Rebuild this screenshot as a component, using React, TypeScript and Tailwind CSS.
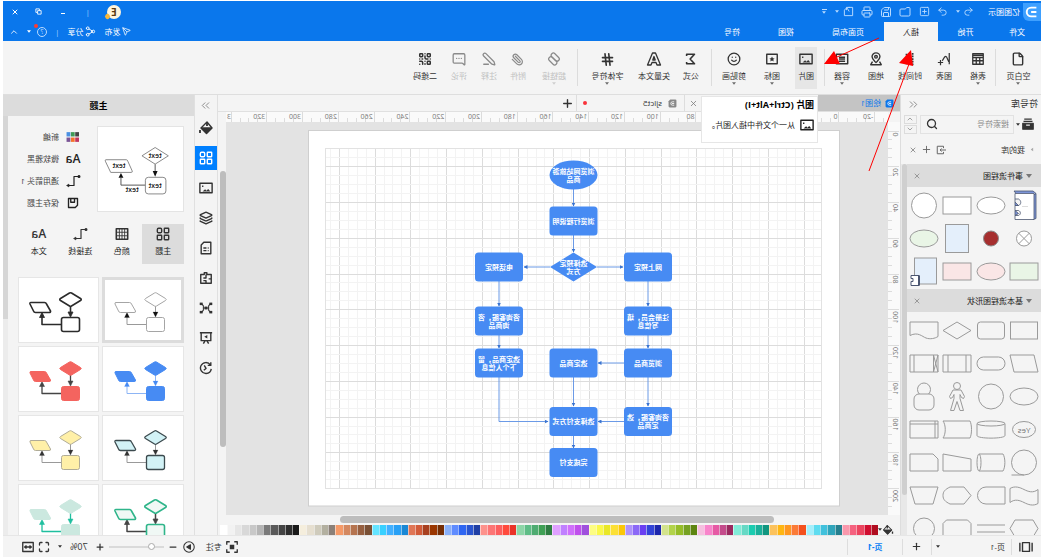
import React from 'react';
import {
  ChevronDown,
  ChevronUp,
  ChevronsLeft,
  ChevronsRight,
  File,
  Folder,
  Hash,
  Layers,
  Maximize,
  MessageSquareMore,
  Minus,
  Paperclip,
  PenLine,
  Plus,
  Printer,
  QrCode,
  Redo2,
  Save,
  Search,
  Send,
  Share2,
  Smile,
  SquarePlus,
  Undo2,
  X,
} from 'lucide-react';

const Glyph: React.FC<{ children: React.ReactNode; className?: string; width?: number }> = ({
  children,
  className = 'size-3.5',
  width = 1.4,
}) => (
  <svg
    viewBox="0 0 16 16"
    className={className}
    fill="none"
    stroke="currentColor"
    strokeWidth={width}
    strokeLinejoin="round"
  >
    {children}
  </svg>
);

const Caret: React.FC<{ className?: string }> = ({ className = '' }) => (
  <svg viewBox="0 0 6 4" className={`h-[3px] w-1 shrink-0 ${className}`} fill="currentColor">
    <path d="M0 0h6L3 4z" />
  </svg>
);

const ThemeGridIcon = ({ className = 'size-3.5' }) => (
  <Glyph className={className} width={1.6}>
    <rect x="1.5" y="1.5" width="5" height="5" rx="0.5" />
    <rect x="9.5" y="1.5" width="5" height="5" rx="1.5" />
    <rect x="1.5" y="9.5" width="5" height="5" rx="0.5" />
    <rect x="9.5" y="9.5" width="5" height="5" rx="0.5" />
  </Glyph>
);

const ConnectorIcon = () => (
  <Glyph className="size-4" width={1.2}>
    <path d="M2 3.5h5v9h5" />
    <circle cx="2" cy="3.5" r="0.9" fill="currentColor" />
    <path d="M12 11l2.500 1.500L12 14z" fill="currentColor" strokeWidth="0.5" />
  </Glyph>
);

const BucketIcon = ({ className = 'size-4' }) => (
  <Glyph className={className}>
    <path d="M7 2l6 6-5.5 5.5L2 8z" />
    <path d="M2.5 8h10L7.500 13z" fill="currentColor" />
    <path d="M7 2v4M14 10v3" strokeWidth="1.8" />
  </Glyph>
);

const PictureIcon = ({ className = 'size-3.5' }) => (
  <Glyph className={className} width={1.6}>
    <path d="M1 2.500h14v11H1z" />
    <path d="M3 12l2.500-3 2 2L9 9.500l3 2.500z" fill="currentColor" stroke="none" />
    <path d="M11 6h1.500" />
  </Glyph>
);

type Tool = { label: string; w: string; icon: React.ReactNode; caret?: boolean; active?: boolean; off?: boolean };

const toolGroups: Tool[][] = [
  [{ label: '空白页', w: 'w-[45px]', icon: <File size={14} strokeWidth={2.4} className="-scale-x-100" />, caret: true }],
  [
    {
      label: '表格',
      w: 'w-[34px]',
      caret: true,
      icon: (
        <Glyph width={1.5}>
          <path d="M2 2h12v12H2zM2 4h12M2 6.500h12M2 10h12M6 6v8M10 6v8" />
        </Glyph>
      ),
    },
    {
      label: '图表',
      w: 'w-[34px]',
      icon: (
        <Glyph>
          <path d="M2 1v13M2 11c2 0 2-6 4-6s2 3 4 5M9 12h6M12 9v6" />
        </Glyph>
      ),
    },
    {
      label: '时间线',
      w: 'w-[34px]',
      icon: (
        <Glyph>
          <path d="M5 1v14M8 3h6M8 8h6M8 13h6" strokeWidth="2" strokeDasharray="2 1" />
        </Glyph>
      ),
    },
    {
      label: '地图',
      w: 'w-[34px]',
      icon: (
        <Glyph width={1.6}>
          <path d="M8 12C5 9 3.500 8 3.500 5.500a4.500 4.500 0 019 0C12.500 8 11 9 8 12z" />
          <circle cx="8" cy="5.500" r="1.500" />
          <path d="M4 11l-2 3.500h12L12 11" />
        </Glyph>
      ),
    },
    {
      label: '容器',
      w: 'w-[34px]',
      caret: true,
      icon: (
        <Glyph width={1.7}>
          <path d="M1.500 2.500h13v11h-13zM4.500 6h7M4.500 8h7M4.500 10.500h7" />
        </Glyph>
      ),
    },
  ],
  [
    { label: '图片', w: 'w-[36px]', active: true, icon: <PictureIcon /> },
    {
      label: '图标',
      w: 'w-[32px]',
      caret: true,
      icon: (
        <Glyph width={1.6}>
          <path d="M2 2.500h12v11H2z" />
          <path d="M8 5l1 2 2 .3-1.500 1.400.4 2.100L8 9.800l-1.900 1 .4-2.100L5 7.300 7 7z" fill="currentColor" stroke="none" />
        </Glyph>
      ),
    },
    { label: '剪贴画', w: 'w-[44px]', caret: true, icon: <Smile size={14} strokeWidth={2.2} /> },
  ],
  [
    {
      label: '公式',
      w: 'w-[40px]',
      icon: (
        <Glyph width={1.8}>
          <path d="M13 4.500V2.500H4L9 8l-5 5.500h9v-2" />
        </Glyph>
      ),
    },
    {
      label: '矢量文本',
      w: 'w-[34px]',
      icon: (
        <Glyph className="size-4" width={1.3}>
          <path d="M6.500 2h3l5 12h-3.500l-1-2.500H6L5 14H1.500zM8 5.500L6.800 9h2.400z" />
        </Glyph>
      ),
    },
    { label: '字体符号', w: 'w-[59px]', caret: true, icon: <Hash size={15} strokeWidth={2.6} /> },
  ],
  [
    {
      label: '超链接',
      w: 'w-[46px]',
      caret: true,
      off: true,
      icon: (
        <Glyph>
          <rect x="3" y="3" width="11" height="5" rx="2.5" transform="rotate(-45 8 8)" />
          <rect x="2" y="8" width="11" height="5" rx="2.5" transform="rotate(-45 8 8)" />
        </Glyph>
      ),
    },
    { label: '附件', w: 'w-[26px]', off: true, icon: <Paperclip size={13} strokeWidth={2.2} /> },
    { label: '注释', w: 'w-[32px]', off: true, icon: <PenLine size={14} strokeWidth={2.2} /> },
    { label: '评论', w: 'w-[28px]', off: true, icon: <MessageSquareMore size={14} strokeWidth={2.2} /> },
    { label: '二维码', w: 'w-[40px]', icon: <QrCode size={14} strokeWidth={2.6} /> },
  ],
];

const menuTabs = [
  { label: '文件', w: 'w-12' },
  { label: '开始', w: 'w-[55px]' },
  { label: '插入', w: 'w-[54px]', active: true },
  { label: '页面布局', w: 'w-[72px]' },
  { label: '视图', w: 'w-[52px]' },
  { label: '符号', w: 'w-[56px]' },
];

const Header = () => (
  <header className="shrink-0 bg-[#0a77ec] text-white">
    <div className="flex h-[21px] items-center">
      <div className="flex size-[18px] items-center justify-center rounded-br-md bg-[#3ea0ff]">
        <svg viewBox="0 0 16 16" className="size-3.5" fill="none" stroke="#fff" strokeWidth="2.2">
          <path d="M3 3h6a5 5 0 010 10H3M3 8h6" />
        </svg>
      </div>
      <span className="ml-[3px] w-[42px] whitespace-nowrap">亿图图示</span>
      <div className="flex items-center text-[#b9dbff]">
        <button aria-label="撤销" className="flex w-[18px] justify-center"><Undo2 size={11} /></button>
        <Caret />
        <button aria-label="恢复" className="ml-1 flex w-[18px] justify-center"><Redo2 size={11} /></button>
        <button aria-label="新建" className="flex w-[19px] justify-center"><SquarePlus size={11} /></button>
        <button aria-label="打开" className="flex w-[19px] justify-center"><Folder size={12} /></button>
        <button aria-label="保存" className="flex w-[19px] justify-center"><Save size={12} /></button>
        <button aria-label="打印" className="flex w-[19px] justify-center"><Printer size={12} /></button>
        <button aria-label="导出" className="flex w-[19px] justify-center">
          <Glyph className="size-[11px]"><path d="M8 2H2v12h12V6M14 6l-4-4M7 8l3-5M6 2h5v4" /></Glyph>
        </button>
        <Caret />
        <button aria-label="更多" className="ml-2 flex flex-col items-center">
          <span className="mb-px h-px w-[5px] bg-current" />
          <Caret />
        </button>
      </div>
      <div className="ml-auto flex items-center">
        <span className="relative flex size-3.5 items-center justify-center rounded-full bg-[#fff5dc] text-[10px] font-bold text-[#5a3a10]">
          E
          <span className="absolute -right-0.5 bottom-0 size-[5px] rotate-45 rounded-sm bg-[#f8b73a]" />
        </span>
        <span className="ml-[17px] w-[15px] text-[#9ccbff]">|</span>
        <button aria-label="最小化" className="flex w-6 justify-center"><span className="mt-[3px] h-px w-1 bg-white" /></button>
        <button aria-label="还原" className="flex w-6 justify-center">
          <Glyph className="size-[7px]" width={2}><path d="M2 6h8v8H2zM6 6V2h8v8h-4" /></Glyph>
        </button>
        <button aria-label="关闭" className="flex w-6 justify-center"><X size={8} strokeWidth={3} /></button>
      </div>
    </div>
    <div className="flex h-[19px] items-center">
      <nav className="flex h-full">
        {menuTabs.map((t) => (
          <button key={t.label} className={`${t.w} ${t.active ? 'bg-[#f4f4f4] text-[#222]' : ''} h-full whitespace-nowrap text-center`}>
            {t.label}
          </button>
        ))}
      </nav>
      <div className="ml-auto flex items-center">
        <button className="flex items-center gap-0.5"><Send size={9} />发布</button>
        <button className="ml-2 flex items-center gap-0.5"><Share2 size={11} />分享</button>
        <span className="mx-2 text-[#9ccbff]">|</span>
        <button className="relative flex size-[10px] items-center justify-center rounded-full border border-[#b9dbff] text-[7px] text-[#b9dbff]">
          ?
          <span className="absolute -right-1 -top-1 size-1 rounded-full bg-[#ff3b30]" />
        </button>
        <Caret className="ml-1.5" />
        <button aria-label="收起" className="ml-2 mr-1.5"><ChevronUp size={10} /></button>
      </div>
    </div>
  </header>
);

const Ribbon = () => (
  <div className="flex h-[54px] shrink-0 border-b border-[#dedede] bg-[#f4f4f4] text-[#333]">
    {toolGroups.map((group, i) => (
      <div key={i} className="flex">
        {i > 0 && <span className="mt-2 h-[37px] w-px bg-[#dcdcdc]" />}
        {group.map((t) => (
          <button key={t.label} disabled={t.off} className={`${t.w} ${t.off ? 'text-[#c0c0c0]' : ''} flex justify-center pt-[6px]`}>
            <span className={`flex h-[42px] flex-col items-center px-[3px] pt-1 ${t.active ? 'bg-[#e6e6e6]' : ''}`}>
              <span className={`flex h-4 items-center ${t.off ? 'text-[#8a8a8a]' : ''}`}>{t.icon}</span>
              <span className="mt-1 whitespace-nowrap">{t.label}</span>
              {t.caret && <Caret className="mt-px opacity-70" />}
            </span>
          </button>
        ))}
      </div>
    ))}
  </div>
);

const Shape: React.FC<{ children: React.ReactNode }> = ({ children }) => (
  <svg viewBox="-16 -16.500 32 33" className="h-[33px] w-8" fill="none" stroke="#9a9a9a" strokeWidth="1">
    {children}
  </svg>
);

const eventShapes: React.ReactNode[] = [
  <g stroke="#4a5570" strokeWidth="0.8">
    <path d="M-12-12l3-2.500h19l-2 2.500M-12-12v25l3 1v-24z" fill="#7d95d8" />
    <path d="M-10-12H9v5.500H5.500C2.500-5 2.500-1 5.500 0H9v5H5.500C3 6 3 9 5.500 10H9v4h-19z" fill="#fff" />
    <path d="M9-6.500V0H5.500L9-3.500M9 5v5L5.500 8z" fill="#7d95d8" />
    <path d="M-4 1h6" stroke="#bbb" strokeWidth="0.5" />
  </g>,
  <ellipse rx="14" ry="8.500" fill="#fff" />,
  <rect x="-14" y="-8.500" width="28" height="17" fill="#fff" />,
  <circle r="12.500" fill="#fff" />,
  <g><circle r="7.500" fill="#fff" /><path d="M-5.500-5.500l11 11M-5.500 5.500l11-11" /></g>,
  <circle r="7.500" fill="#a62f2f" stroke="#8a8a8a" />,
  <rect x="-11.500" y="-14" width="23" height="28" fill="#e4effb" />,
  <ellipse rx="14" ry="8.500" fill="#e9f5e6" />,
  <rect x="-14" y="-8.500" width="28" height="17" fill="#e9f5e6" />,
  <ellipse rx="14" ry="8.500" fill="#fae6e6" />,
  <rect x="-14" y="-8.500" width="28" height="17" fill="#fae6e6" />,
  <g>
    <rect x="-12.500" y="-13.500" width="22" height="26" fill="#e4effb" />
    <path d="M5 4h8v3h-2v3h2v4H5z" fill="#fff" stroke="#4a5570" />
    <path d="M5 4v10" stroke="#4a5570" strokeWidth="2" />
  </g>,
];

const basicShapes: React.ReactNode[] = [
  <rect x="-13.500" y="-8.500" width="27" height="17" />,
  <rect x="-13.500" y="-8.500" width="27" height="17" rx="3" />,
  <path d="M0-8.500L14 0 0 8.500-14 0z" />,
  <path d="M-14-8.500h28V5c-8-4-12 1-16 2.500S-11 8-14 6z" />,
  <path d="M-10-8.500h24l-4 17h-24z" />,
  <rect x="-14" y="-6.500" width="28" height="13" rx="6.500" />,
  <path d="M-14-8.500h28v17h-28zM-9-8.500v17M9-8.500v17" />,
  <path d="M-14-8.500h28v17h-28zM-9.500-8.500v17M10-8.500v17M-14-8.500l4.500 17M-9.500-8.500l-4.500 17" />,
  <ellipse rx="14" ry="8.500" />,
  <circle r="12.500" />,
  <g>
    <circle cy="-10.500" r="3.500" />
    <path d="M-4-6.500h8L7.500 0 6.500 2 4.500 1 3-2l0 4 3.500 12H3L0 5l-3 9h-3.500L-3 2v-4l-1.500 3-2 1-1-2z" />
  </g>,
  <g><circle cy="-7" r="6.500" /><rect x="-10" y="-2.500" width="20" height="16" rx="5" fill="#f4f4f4" /></g>,
  <g>
    <ellipse rx="11.500" ry="8" />
    <text x="0" y="3" textAnchor="middle" fontSize="8" fill="#777" stroke="none">Yes</text>
  </g>,
  <g><ellipse cy="-6" rx="14" ry="2.500" /><path d="M-14-6V6c0 3.500 28 3.500 28 0V-6" /></g>,
  <path d="M-13-8.500h27c-3 4-3 13 0 17h-27c-2-4-2-13 0-17z" />,
  <path d="M-14-8.500h28v17h-28zM-14-5.500h28M-11-8.500v17" />,
  <g><circle r="12.500" /><path d="M0 12.500h12.500" /></g>,
  <g><path d="M12-8.500h-24c-2.500 4-2.500 13 0 17h24" /><ellipse cx="12" rx="2" ry="8.500" /></g>,
  <path d="M-14-3.500l28-5v17h-28z" />,
  <path d="M-9-8.500h23v17h-28v-12z" />,
  <path d="M-14-6c5 4 10 2 14 0s9-4 14-1V7c-5-4-10-2-14 0s-9 4-14 1z" />,
  <path d="M-14-8.500H5a8.500 8.500 0 010 17h-19z" />,
  <path d="M-14 0l7-8.500H7C12-6 14-4 14 0S12 6 7 8.500H-7z" />,
  <path d="M-14-8.500h28l-5 17H-9z" />,
  <path d="M-14 0l5-8.500H9L14 0 9 8.500H-9z" />,
  <path d="M-14-3.500h28M-14 3.500h28" />,
  <path d="M-14 9v-14l3.500-3.500h21L14-5V9z" />,
  <circle r="10.500" />,
];

const LibrarySection: React.FC<{ title: string; shapes: React.ReactNode[] }> = ({ title, shapes }) => (
  <section>
    <div className="flex h-[23px] items-center bg-[#dcdcdc] px-1.5 text-[#222]">
      <svg viewBox="0 0 6 4" className="mx-[3px] h-1 w-[6px] shrink-0" fill="#777">
        <path d="M0 0h6L3 4z" />
      </svg>
      {title}
      <button aria-label={`关闭${title}`} className="ml-auto text-[#777]"><X size={8} /></button>
    </div>
    <div className="grid grid-cols-4 justify-items-center pt-0.5 pb-px">
      {shapes.map((s, i) => <Shape key={i}>{s}</Shape>)}
    </div>
  </section>
);

const SymbolLibrary = () => (
  <aside className="flex w-[141px] shrink-0 flex-col overflow-hidden border-r border-[#ddd] bg-[#f4f4f4]">
    <div className="flex h-[18px] shrink-0 items-center pl-[3px] pr-1.5 text-[9px]">
      符号库
      <button aria-label="收起符号库" className="ml-auto text-[#777]"><ChevronsLeft size={13} strokeWidth={1.5} /></button>
    </div>
    <div className="flex h-[22px] shrink-0 items-center pl-[7px] pr-[3px]">
      <Glyph className="size-3" width={1.5}>
        <path d="M3 1.500h10M2 4.500h12" />
        <path d="M1 7h14v8H1z" fill="currentColor" />
        <path d="M5.500 9.500h5" stroke="#fff" />
      </Glyph>
      <Caret className="ml-0.5" />
      <label className="ml-0.5 flex h-[19px] flex-1 items-center border border-[#e2e2e2] px-1">
        <input aria-label="搜索符号" placeholder="搜索符号" className="w-0 flex-1 bg-transparent outline-none placeholder:text-[#8a8a8a]" />
        <Search size={12} strokeWidth={2.6} className="mr-px -scale-x-100" />
      </label>
      <div className="ml-[3px] flex flex-col gap-px text-[#777]">
        <button aria-label="上一个" className="flex h-[9px] w-[13px] items-center justify-center border border-[#dcdcdc]"><ChevronUp size={8} /></button>
        <button aria-label="下一个" className="flex h-[9px] w-[13px] items-center justify-center border border-[#dcdcdc]"><ChevronDown size={8} /></button>
      </div>
    </div>
    <div className="flex h-[29px] shrink-0 items-center pl-[7px] pr-2">
      <Caret className="mr-[5px] -rotate-90 text-[#aaa]" />
      我的库
      <div className="ml-auto flex items-center gap-1 text-[#666]">
        <button aria-label="导入">
          <Glyph className="size-2.5" width={1.6}><path d="M4 5V2h10v12H4v-3M0 8h9M7 5.500L9.500 8 7 10.500" /></Glyph>
        </button>
        <button aria-label="添加库"><Plus size={11} /></button>
        <button aria-label="关闭我的库"><X size={8} /></button>
      </div>
    </div>
    <div className="flex min-h-0 flex-1 overflow-hidden">
      <div className="h-0 flex-1">
        <LibrarySection title="事件流程图" shapes={eventShapes} />
        <LibrarySection title="基本流程图形状" shapes={basicShapes} />
      </div>
      <div className="w-[6px] bg-[#e8e8e8]">
        <div className="h-[331px] w-[5px] rounded-full bg-[#cfcfcf]" />
      </div>
    </div>
  </aside>
);

// ruler and page share one scale: 5 units are 8.94px, origin at the page corner
const UNIT = 1.788;
const PAGE_X = 204.5;
const PAGE_Y = 130.5;

const steps = (from: number, to: number, by: number) => {
  const out: number[] = [];
  for (let v = from; v <= to; v += by) out.push(v);
  return out;
};

const TopRuler = () => (
  <svg viewBox="156 112 662 10" className="h-[10px] w-[662px] shrink-0 bg-[#fafafa]" stroke="#dcdcdc">
    {steps(-25, 340, 5).map((v) => {
      const x = Math.round(PAGE_X + v * UNIT) + 0.5;
      return <path key={v} d={`M${x} 122v${v % 20 === 0 ? -10 : -4}`} />;
    })}
    {steps(-20, 320, 20).map((v) => (
      <text key={v} x={PAGE_X + v * UNIT + 2} y="119" fontSize="7" fill="#777" stroke="none">{v}</text>
    ))}
    <text x="813" y="119" fontSize="7" fill="#777" stroke="none">3</text>
  </svg>
);

const SideRuler = () => (
  <svg viewBox="144 122 12 393" className="h-[393px] w-3 shrink-0 bg-[#fafafa]" stroke="#dcdcdc">
    {steps(0, 210, 5).map((v) => {
      const y = Math.round(PAGE_Y + v * UNIT) + 0.5;
      return <path key={v} d={`M156 ${y}h${v % 20 === 0 ? -11 : -4}`} />;
    })}
    {steps(0, 200, 20).map((v) => {
      const y = PAGE_Y + v * UNIT + (v === 0 ? 6 : v < 100 ? 10 : 14);
      return (
        <text key={v} transform={`translate(151 ${y}) rotate(-90)`} fontSize="7" fill="#777" stroke="none">{v}</text>
      );
    })}
  </svg>
);

type Node = { x: number; y: number; lines: string[]; kind?: 'ellipse' | 'diamond' };

const nodes: Node[] = [
  { x: 470.5, y: 175, kind: 'ellipse', lines: ['浏览网站旅游', '商品'] },
  { x: 470.5, y: 221, lines: ['浏览行程说明'] },
  { x: 470.5, y: 267, kind: 'diamond', lines: ['选择预定', '方式'] },
  { x: 396, y: 267, lines: ['网上预定'] },
  { x: 545, y: 267, lines: ['电话预定'] },
  { x: 396, y: 321, lines: ['注册会员，填', '写信息'] },
  { x: 545, y: 321, lines: ['咨询客服，咨', '询商品'] },
  { x: 396, y: 363, lines: ['浏览商品'] },
  { x: 470.5, y: 363, lines: ['选定商品'] },
  { x: 545, y: 363, lines: ['选定商品，留', '下个人信息'] },
  { x: 396, y: 421.5, lines: ['咨询客服，选', '定商品'] },
  { x: 470.5, y: 421.5, lines: ['选择支付方式'] },
  { x: 470.5, y: 462.5, lines: ['完成支付'] },
];

const links = [
  'M470.500 189v17',
  'M470.500 235v17',
  'M447 267h-26',
  'M494 267h26',
  'M396 281v25',
  'M545 281v25',
  'M396 335v13',
  'M545 335v13',
  'M420 363h26',
  'M396 377v29',
  'M470.500 377v29',
  'M420 421.500h26',
  'M545 377v44.500h-49',
  'M470.500 436v12',
];

const Canvas = () => (
  <svg viewBox="156 122 662 393" className="h-[393px] w-[662px] shrink-0">
    <defs>
      <marker id="tip" viewBox="0 0 4 4" refX="3.5" refY="2" markerWidth="4" markerHeight="4" orient="auto">
        <path d="M0 0l4 2-4 2z" fill="#3b74d0" />
      </marker>
    </defs>
    <rect x="204.500" y="130.500" width="531" height="375.500" fill="#fff" stroke="#cfcfcf" />
    {steps(15, 285, 5).map((v) => (
      <path key={`v${v}`} d={`M${Math.round(PAGE_X + v * UNIT) - 0.5} 149v340`} stroke={v % 20 === 0 ? '#dcdcdc' : '#f3f3f3'} />
    ))}
    {steps(15, 200, 5).map((v) => (
      <path key={`h${v}`} d={`M223 ${Math.round(PAGE_Y + v * UNIT) + 0.5}h495`} stroke={v % 20 === 0 ? '#dcdcdc' : '#f3f3f3'} />
    ))}
    <rect x="222.500" y="148.500" width="496" height="340" fill="none" stroke="#e2e2e2" />
    {links.map((d) => (
      <path key={d} d={d} fill="none" stroke="#6b9ae6" markerEnd="url(#tip)" />
    ))}
    {nodes.map((n) => (
      <g key={`${n.x}-${n.y}`} fill="#478bf3">
        {n.kind === 'ellipse' && <ellipse cx={n.x} cy={n.y} rx="24" ry="14.500" />}
        {n.kind === 'diamond' && <path d={`M${n.x} ${n.y - 14.5}l23.500 14.500-23.500 14.500-23.500-14.500z`} />}
        {!n.kind && <rect x={n.x - 24} y={n.y - 14.5} width="48" height="29" rx="3.500" />}
        {n.lines.map((line, i) => (
          <text
            key={line}
            x={n.x}
            y={n.y + 2.5 + (i - (n.lines.length - 1) / 2) * 8}
            textAnchor="middle"
            fontSize="7"
            fontWeight="700"
            fill="#fff"
          >
            {line}
          </text>
        ))}
      </g>
    ))}
  </svg>
);

const swatches = [
  '#b00d20', '#d00e30', '#ec4560', '#f5627f', '#f999ad',
  '#26808f', '#30a5bb', '#41c1dc', '#5edcf0', '#a5effb',
  '#f4511e', '#fb7b37', '#ff9820', '#ffb612', '#fcc25c',
  '#119680', '#1bb09a', '#1bccb0', '#66d9c5', '#82ecd8',
  '#9b2a60', '#c44b8b', '#e65aa5', '#f885cb', '#f5bfdf',
  '#5d8510', '#76a122', '#96bd28', '#b2d34a', '#d3e38c',
  '#1d27ad', '#3344d8', '#6a3ff2', '#8b68f6', '#ae92fb',
  '#fbc708', '#fce035', '#e9e726', '#faf84a', '#fdfd82',
  '#a050dd', '#c050ec', '#d070fb', '#c080ff', '#dfa0ff',
  '#2e7d42', '#3fa055', '#4fac72', '#5fbd87', '#8ed6a8',
  '#ea3228', '#ff4a3d', '#fc5f5f', '#fc7575', '#fd928c',
  '#1f3fa5', '#2a55d0', '#2f66f2', '#5f8cff', '#8ab0f8',
  '#752e05', '#9a3600', '#a84020', '#d25c3a', '#e07656',
  '#1a88d5', '#28a0f5', '#42b0ff', '#38d0ff', '#64e4ff',
  '#7a5035', '#965f40', '#b5744f', '#d48860', '#f59a68',
  '#8b8078', '#b3b0a0', '#cfcbbc', '#e6dfd0', '#f5eedd',
  '#1a1a1a', '#2e2e2e', '#444444', '#5a5a5a', '#7a7a7a',
  '#b5b5b5', '#c8c8c8', '#d8d8d8', '#e6e6e6', '#f2f2f2',
  '#ffffff',
];

const DocIcon: React.FC<{ className: string }> = ({ className }) => (
  <svg viewBox="0 0 16 16" className={`size-[9px] ${className}`} fill="currentColor">
    <path d="M1 3a2 2 0 012-2h9l3 3v9a2 2 0 01-2 2H3a2 2 0 01-2-2z" />
    <path d="M5 5h3a3 3 0 010 6H5M5 8h4" fill="none" stroke="#fff" strokeWidth="1.5" />
  </svg>
);

const Tooltip = () => (
  <div className="absolute left-[82px] top-px z-10 h-[47px] w-[117px] border border-[#e6e6e6] bg-white px-[3px] pt-[3px]">
    <div className="whitespace-nowrap text-[9px] font-bold text-black">图片 (Ctrl+Alt+I)</div>
    <div className="mt-2 flex items-center gap-[5px] whitespace-nowrap text-[#222]">
      <PictureIcon />
      从一个文件中插入图片。
    </div>
  </div>
);

const Workspace = () => (
  <main className="relative flex min-w-0 flex-1 flex-col bg-[#f4f4f4]">
    <div className="flex h-[17px] shrink-0 items-center border-b border-[#e0e0e0]">
      <button className="flex h-full w-[82px] flex-none items-center gap-1 bg-[#c4c4c4] pl-1.5 text-[#0a77ec]">
        <DocIcon className="text-[#0a77ec]" />
        绘图1
      </button>
      <button aria-label="关闭绘图" className="flex h-full w-[134px] flex-none items-center justify-end border-r border-[#ddd] pr-1 text-[#777]">
        <X size={9} />
      </button>
      <div className="flex h-full w-[108px] flex-none items-center gap-1.5 border-r border-[#ddd] pl-[7px] pr-1.5">
        <DocIcon className="text-[#888]" />
        sjlct5
        <span className="ml-auto size-1 rounded-full bg-[#f8323a]" />
      </div>
      <button aria-label="新建标签" className="ml-0.5 flex-none"><Plus size={13} strokeWidth={2.6} /></button>
    </div>
    <Tooltip />
    <div className="flex min-h-0 flex-1">
      <div className="flex min-w-0 flex-1 flex-col overflow-hidden">
        <div className="flex shrink-0 pl-3"><TopRuler /></div>
        <div className="flex min-h-0 flex-1 overflow-hidden bg-[#e3e3e3]">
          <SideRuler />
          <Canvas />
        </div>
        <div className="flex h-[9px] shrink-0 items-center bg-[#f4f4f4] pl-[126px]">
          <div className="h-[7px] w-[434px] rounded-full bg-[#bdbdbd]" />
        </div>
      </div>
      <div className="w-2 shrink-0 bg-[#f4f4f4] pt-[59px]">
        <div className="h-[276px] w-[6px] rounded-full bg-[#bdbdbd]" />
      </div>
    </div>
    <div className="flex h-[11px] shrink-0 items-center pl-1.5">
      <BucketIcon className="size-3 -scale-x-100" />
      <Caret />
      <div className="mr-0.5 flex h-[10px] flex-1">
        {swatches.map((c) => (
          <button key={c} aria-label={c} className="flex-1 border-r border-white/50" style={{ backgroundColor: c }} />
        ))}
      </div>
    </div>
  </main>
);

const sideIcons: { label: string; icon: React.ReactNode; active?: boolean }[] = [
  { label: '填充', icon: <BucketIcon /> },
  { label: '主题', icon: <ThemeGridIcon />, active: true },
  { label: '图片', icon: <PictureIcon /> },
  { label: '图层', icon: <Layers size={14} strokeWidth={2.4} /> },
  {
    label: '属性',
    icon: (
      <Glyph width={1.6}>
        <path d="M2.500 1.500h8l3 3v10h-11zM5 8h1M7.500 8H11M5 11h1M7.500 11H11" />
      </Glyph>
    ),
  },
  {
    label: '组件',
    icon: (
      <Glyph width={1.6}>
        <path d="M2 4h5V2h3v2h4v10H2zM2 9h3M8 4v4h3M8 14v-3h3" />
      </Glyph>
    ),
  },
  {
    label: '布局',
    icon: (
      <Glyph width={1.2}>
        <path d="M5 8h6M3 3l2 2.500v5L3 13M13 3l-2 2.500v5L13 13" />
        <path d="M1 2h3v2.500H1zM12 2h3v2.500h-3zM1 11.500h3V14H1zM12 11.500h3V14h-3zM6.500 6.500h3v3h-3z" fill="currentColor" strokeWidth="0.3" />
      </Glyph>
    ),
  },
  {
    label: '演示',
    icon: (
      <Glyph width={1.6}>
        <path d="M1 2h14M2.500 2v9h11V2M5 14.500L7 11M11 14.500L9 11" />
        <path d="M6.500 4.500l3.500 2-3.500 2z" fill="currentColor" stroke="none" />
      </Glyph>
    ),
  },
  {
    label: '历史',
    icon: (
      <Glyph width={1.6}>
        <path d="M3 4.500A6.200 6.200 0 118 14.200 6 6 0 012 9M2.500 1.500v3.500H6M10 5L8 8.500l2.500 2" />
      </Glyph>
    ),
  },
];

const SideStrip = () => (
  <div className="flex w-6 shrink-0 flex-col items-center border-x border-[#e0e0e0] bg-[#f4f4f4] text-[#333]">
    <button aria-label="收起面板" className="mt-1 mb-1 h-[13px] text-[#777]"><ChevronsRight size={13} strokeWidth={1.5} /></button>
    {sideIcons.map((s) => (
      <button
        key={s.label}
        aria-label={s.label}
        className={`mb-[6px] flex h-6 w-full shrink-0 items-center justify-center ${s.active ? 'bg-[#0080ff] text-white' : ''}`}
      >
        {s.icon}
      </button>
    ))}
  </div>
);

type Theme = { name: string; fill: string; stroke: string; line: string; tip: string; w: number; lw: number };

const themes: Theme[] = [
  { name: '简约', fill: '#fff', stroke: '#a5a5a5', line: '#999', tip: '#111', w: 1, lw: 1 },
  { name: '粗线', fill: '#fff', stroke: '#2b2b2b', line: '#2b2b2b', tip: '#2b2b2b', w: 1.6, lw: 1.6 },
  { name: '蓝色', fill: '#478bf3', stroke: '#478bf3', line: '#8db5f5', tip: '#478bf3', w: 1, lw: 1 },
  { name: '红色', fill: '#f4645f', stroke: '#f4645f', line: '#444', tip: '#444', w: 1, lw: 1.3 },
  { name: '浅蓝', fill: '#d2f2f6', stroke: '#3c4a4e', line: '#999', tip: '#333', w: 1.3, lw: 1 },
  { name: '黄色', fill: '#fff0a8', stroke: '#b0ac98', line: '#999', tip: '#333', w: 1, lw: 1 },
  { name: '绿色', fill: '#f0f8f5', stroke: '#2fb58a', line: '#444', tip: '#444', w: 1.6, lw: 1.5 },
  { name: '浅绿', fill: '#cbe8df', stroke: '#cbe8df', line: '#1fbf9f', tip: '#1fbf9f', w: 1, lw: 1.3 },
];

const ThemeThumb: React.FC<{ t: Theme }> = ({ t }) => (
  <svg viewBox="0 0 81 65" className="h-[65px] w-[81px]" strokeLinejoin="round">
    <g fill="none" stroke={t.line} strokeWidth={t.lw}>
      <path d="M28.500 28v8M38 46.500h19V38" />
    </g>
    <path d="M26 34h5l-2.500 5zM54.500 39.500h5L57 34.500z" fill={t.tip} stroke={t.tip} strokeWidth={t.lw - 0.8} />
    <g fill={t.fill} stroke={t.stroke} strokeWidth={t.w}>
      <path d="M27.500 15q1-.6 2 0l9 5.500q1.500 1 0 2l-9 5.500q-1 .6-2 0l-9-5.500q-1.500-1 0-2z" />
      <rect x="19.500" y="39.500" width="18" height="14" rx="2" />
      <path d="M54.500 24.500H68q1.500 0 1 1.500l-3.500 7q-.5 1.500-2 1.500H50q-2 0-1.500-1.500l4-7q.5-1.500 2-1.500z" />
    </g>
  </svg>
);

const ThemePreview = () => (
  <svg viewBox="0 0 87 86" className="h-[86px] w-[87px] border border-[#e4e4e4] bg-white" fill="none" stroke="#888" fontSize="7">
    <path d="M28.500 38v9M38.500 59.500h25V52" stroke="#555" />
    <path d="M26 45h5l-2.500 6zM61 52h5l-2.500-5z" fill="#111" stroke="none" />
    <path d="M28.500 21L42 29.500 28.500 38 15 29.500z" strokeLinejoin="round" />
    <rect x="17.500" y="51.500" width="21" height="17" rx="3" />
    <path d="M58 33.500h21q1 0 .5 1.500L74 46.500H53q-1.500 0-1-1.500l4.500-10q.5-1.500 1.500-1.500z" />
    <g fill="#111" stroke="none" textAnchor="middle" fontWeight="600">
      <text x="28.500" y="32">text</text>
      <text x="28.500" y="62">text</text>
      <text x="65.500" y="42">text</text>
      <text x="52" y="67">text</text>
    </g>
  </svg>
);

const Palette = () => (
  <svg viewBox="0 0 12 9" className="h-[10px] w-[13px]">
    {['#444', '#3f9a55', '#4a90e2', '#c2355f', '#f5722a', '#7a5596'].map((c, i) => (
      <rect key={c} x={(i % 3) * 4} y={i < 3 ? 0 : 5} width="3.500" height="4" fill={c} />
    ))}
  </svg>
);

const AaIcon = () => <span className="text-[12px] font-semibold leading-4">Aa</span>;

const quickItems = [
  { label: '新编', icon: <Palette /> },
  { label: '微软雅黑', icon: <AaIcon /> },
  { label: '通用箭头 1', icon: <ConnectorIcon /> },
  {
    label: '保存主题',
    icon: (
      <Glyph className="size-3" width={1.8}>
        <path d="M2 2h12v12H5l-3-3zM6 2v5h5V2" />
      </Glyph>
    ),
  },
];

const themeTabs = [
  { label: '主题', icon: <ThemeGridIcon />, active: true },
  {
    label: '颜色',
    icon: (
      <Glyph width={1.5}>
        <path d="M1.500 2h13v12h-13z" strokeWidth="1.8" />
        <path d="M2 6h12M2 10h12M5 2v12M8 2v12M11 2v12" strokeWidth="1" />
      </Glyph>
    ),
  },
  { label: '连接线', icon: <ConnectorIcon /> },
  { label: '文本', icon: <AaIcon /> },
];

const ThemePanel = () => (
  <aside className="flex w-[191px] shrink-0 flex-col overflow-hidden bg-[#f4f4f4]">
    <h2 className="flex h-[21px] shrink-0 items-center justify-center bg-[#dcdcdc] text-[9px] font-bold text-black">主题</h2>
    <div className="flex min-h-0 flex-1">
      <div className="h-0 flex-1 pl-[10px] pr-2.5 pt-[10px]">
        <div className="flex">
          <ThemePreview />
          <div className="ml-4 flex flex-col">
            {quickItems.map((q) => (
              <button key={q.label} className="flex h-[22px] items-center whitespace-nowrap text-[#444]">
                <span className="mr-1.5 flex w-4 justify-center text-[#222]">{q.icon}</span>
                {q.label}
              </button>
            ))}
          </div>
        </div>
        <div className="mt-2.5 grid grid-cols-4 text-[#222]">
          {themeTabs.map((t) => (
            <button key={t.label} className={`flex h-10 flex-col items-center pt-0.5 ${t.active ? 'bg-[#dcdcdc]' : ''}`}>
              <span className="flex h-4 items-center text-[#333]">{t.icon}</span>
              <span className="mt-1">{t.label}</span>
            </button>
          ))}
        </div>
        <div className="mt-[13px] grid grid-cols-2 gap-[3px]">
          {themes.map((t, i) => (
            <button
              key={t.name}
              aria-label={t.name}
              className={`flex h-[66px] items-center justify-center overflow-hidden bg-white ${i === 0 ? 'border-[3px] border-[#dcdcdc]' : 'border border-[#e6e6e6]'}`}
            >
              <span className="shrink-0"><ThemeThumb t={t} /></span>
            </button>
          ))}
        </div>
      </div>
      <div className="w-[5px] bg-[#ececec]">
        <div className="h-[203px] bg-[#d6d6d6]" />
      </div>
    </div>
  </aside>
);

const StatusBar = () => (
  <footer className="flex h-[22px] shrink-0 items-center border-t border-[#e6e6e6] bg-[#f4f4f4] text-[#333]">
    <button aria-label="页面视图" className="flex w-[29px] justify-center">
      <Glyph width={1.6}><path d="M4 3h8v10H4zM1 3v10M15 3v10" /></Glyph>
    </button>
    <button className="flex h-4 w-[81px] items-center justify-between border-x border-[#ddd] pl-1.5 pr-1">
      页-1
      <Caret />
    </button>
    <button aria-label="添加页" className="flex h-4 w-[29px] items-center justify-center border-r border-[#ddd]"><Plus size={11} strokeWidth={2.6} /></button>
    <button className="h-4 w-[55px] border-r border-[#ddd] text-center font-bold text-[#0a80f5]">页-1</button>
    <div className="ml-auto flex items-center">
      <button className="flex items-center gap-1">
        <Glyph className="size-3" width={1.8}>
          <path d="M1 5V1h4M11 1h4v4M15 11v4h-4M5 15H1v-4" />
          <path d="M5 5h6v6H5z" fill="currentColor" stroke="none" />
        </Glyph>
        专注
      </button>
      <button aria-label="播放" className="ml-[11px]">
        <Glyph className="size-3"><circle cx="8" cy="8" r="7" /><path d="M6 5l5 3-5 3z" fill="currentColor" /></Glyph>
      </button>
      <button aria-label="缩小" className="ml-[5px]"><Minus size={10} strokeWidth={3} /></button>
      <input
        type="range"
        aria-label="缩放"
        defaultValue={18}
        className="ml-1 h-0.5 w-[55px] appearance-none bg-[#dadada] [&::-webkit-slider-thumb]:size-[7px] [&::-webkit-slider-thumb]:appearance-none [&::-webkit-slider-thumb]:rounded-full [&::-webkit-slider-thumb]:border [&::-webkit-slider-thumb]:border-[#aaa] [&::-webkit-slider-thumb]:bg-white"
      />
      <button aria-label="放大" className="ml-1"><Plus size={10} strokeWidth={3} /></button>
      <button className="ml-[7px] flex items-center gap-2 text-[9px]">70%<Caret /></button>
      <button aria-label="全屏" className="ml-2"><Maximize size={12} strokeWidth={2.6} /></button>
      <button aria-label="适合宽度" className="ml-1 mr-[19px]">
        <Glyph className="size-3" width={1.8}><path d="M1 2h14v12H1zM3.500 8h9M6 6L3.500 8 6 10M10 6l2.500 2L10 10" /></Glyph>
      </button>
    </div>
  </footer>
);

const Pointers = () => (
  <svg viewBox="0 0 240 180" className="pointer-events-none absolute left-0 top-0 z-20 h-[180px] w-[240px]" fill="#fe0000" stroke="#fe0000">
    <path d="M165 38l42 19M175 171L135 64" />
    <path d="M220 64L210 51l-6 13zM133 50l-2 16 14-3z" stroke="none" />
  </svg>
);

export default function App() {
  return (
    <div className="relative flex h-screen -scale-x-100 flex-col overflow-hidden bg-white px-[3px] pt-px font-['Open_Sans','Noto_Sans_CJK_SC',sans-serif] text-[8px] leading-[10px] text-[#333]">
      <Header />
      <Ribbon />
      <div className="flex min-h-0 flex-1">
        <SymbolLibrary />
        <Workspace />
        <SideStrip />
        <ThemePanel />
      </div>
      <StatusBar />
      <Pointers />
    </div>
  );
}
